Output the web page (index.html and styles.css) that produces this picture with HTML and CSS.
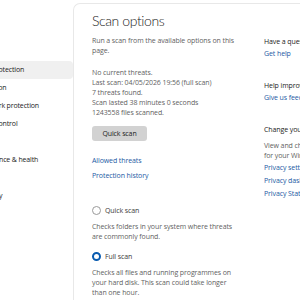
FILE: index.html
```html
<!DOCTYPE html>
<html>
<head>
<meta charset="utf-8">
<link rel="stylesheet" href="styles.css">
</head>
<body>
<div class="app">
  <nav class="sidebar">
    <ul class="nav">
      <li class="nav-item">Home</li>
      <li class="nav-item active">Virus &amp; threat protection</li>
      <li class="nav-item">Account protection</li>
      <li class="nav-item">Firewall &amp; network protection</li>
      <li class="nav-item">App &amp; browser control</li>
      <li class="nav-item">Device security</li>
      <li class="nav-item">Device performance &amp; health</li>
      <li class="nav-item">Family options</li>
      <li class="nav-item">Protection history</li>
    </ul>
  </nav>
  <main class="panel">
    <section class="main">
      <h1 class="title">Scan options</h1>
      <p class="text intro">Run a scan from the available options on this page.</p>
      <div class="status">
        <p class="text">No current threats.</p>
        <p class="text">Last scan: 04/05/2026 19:56 (full scan)</p>
        <p class="text">7 threats found.</p>
        <p class="text">Scan lasted 38 minutes 0 seconds</p>
        <p class="text">1243558 files scanned.</p>
      </div>
      <button class="btn">Quick scan</button>
      <div class="links">
        <a class="link">Allowed threats</a>
        <a class="link">Protection history</a>
      </div>
      <div class="options">
        <div class="option">
          <label class="radio-row"><span class="radio"></span><span class="radio-label">Quick scan</span></label>
          <p class="text desc">Checks folders in your system where threats are commonly found.</p>
        </div>
        <div class="option">
          <label class="radio-row"><span class="radio checked"></span><span class="radio-label">Full scan</span></label>
          <p class="text desc">Checks all files and running programmes on your hard disk. This scan could take longer than one hour.</p>
        </div>
      </div>
    </section>
    <aside class="aside">
      <div class="group">
        <p class="heading">Have a question?</p>
        <a class="link">Get help</a>
      </div>
      <div class="group">
        <p class="heading">Help improve Microsoft Defender</p>
        <a class="link">Give us feedback</a>
      </div>
      <div class="group">
        <p class="heading">Change your privacy settings</p>
        <p class="text">View and change privacy settings<br>for your Windows device.</p>
        <a class="link">Privacy settings</a>
        <a class="link">Privacy dashboard</a>
        <a class="link">Privacy Statement</a>
      </div>
    </aside>
  </main>
</div>
</body>
</html>
```
FILE: styles.css
```css
* { box-sizing: border-box; margin: 0; padding: 0; }
html, body { width: 300px; height: 300px; overflow: hidden; background: #ffffff; }
body { font-family: "Open Sans", "Noto Sans", sans-serif; color: #1b1b1b; }
.app { display: flex; height: 300px; }
.sidebar { width: 73px; flex: none; overflow: hidden; padding-top: 43px; }
.nav { list-style: none; margin-left: -63px; width: 136px; }
.nav-item { height: 18px; line-height: 18px; font-size: 7px; letter-spacing: -0.15px; color: #1b1b1b; white-space: nowrap; padding-left: 10px; border-radius: 0 4px 4px 0; }
.nav-item.active { background: #f0f0f0; }
.panel { flex: 1; margin-top: 3px; border-top: 1px solid #e8e8e8; border-left: 1px solid #e8e8e8; border-top-left-radius: 7px; display: flex; gap: 24px; padding: 8px 0 0 18px; min-width: 0; overflow: hidden; }
.main { width: 148px; flex: none; }
.title { font-family: "Lato", "Open Sans", sans-serif; font-size: 14px; font-weight: 300; letter-spacing: -0.4px; line-height: 18px; color: #1b1b1b; }
.text { font-size: 7px; letter-spacing: -0.1px; line-height: 10px; color: #5f5f5f; }
.intro { margin-top: 6px; }
.status { margin-top: 12px; }
.btn { display: block; margin-top: 8px; width: 55px; height: 15px; border: none; border-radius: 3px; background: #d2d2d2; font-family: inherit; font-size: 7px; letter-spacing: -0.1px; color: #1b1b1b; }
.links { margin-top: 15px; }
.link { display: block; font-size: 7px; letter-spacing: -0.1px; line-height: 10px; color: #1c5aa4; white-space: nowrap; }
.links .link + .link { margin-top: 5px; }
.options { margin-top: 24px; }
.option + .option { margin-top: 9px; }
.radio-row { display: flex; align-items: center; gap: 4px; height: 10px; }
.radio { width: 9px; height: 9px; border-radius: 50%; border: 1px solid #9a9a9a; flex: none; }
.radio.checked { border: 2.5px solid #0a5cb0; }
.radio-label { font-size: 7px; letter-spacing: -0.1px; color: #3b3b3b; }
.desc { margin-top: 7px; }
.aside { flex: none; width: 120px; padding-top: 25px; white-space: nowrap; }
.group + .group { margin-top: 22px; }
.heading { font-size: 7px; letter-spacing: -0.1px; line-height: 10px; color: #1b1b1b; }
.group .heading + .link { margin-top: 2px; }
.group .heading + .text { margin-top: 6px; }
.group .text + .link { margin-top: 2px; }
.group .link + .link { margin-top: 3px; }
```
